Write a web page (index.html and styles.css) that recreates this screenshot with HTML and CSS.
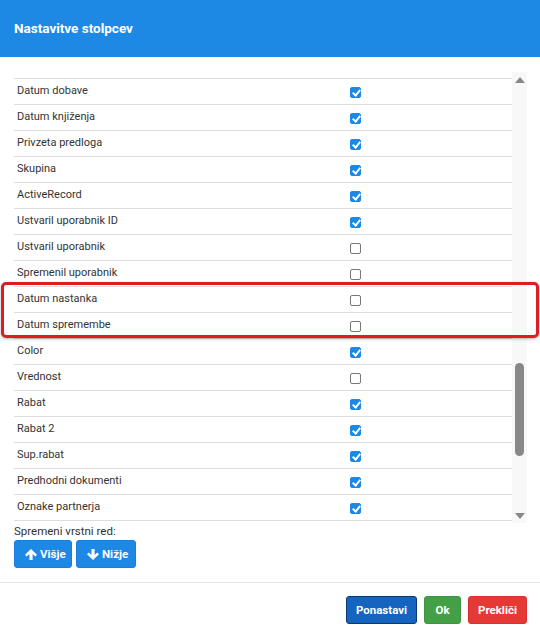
FILE: index.html
```html
<!DOCTYPE html>
<html lang="sl">
<head>
    <meta charset="UTF-8">
    <meta name="viewport" content="width=device-width, initial-scale=1.0">
    <title>Nastavitve stolpcev</title>
    <link rel="stylesheet" href="styles.css">
</head>
<body>
    <div class="modal">
        <div class="modal-header">
            <h1>Nastavitve stolpcev</h1>
        </div>

        <div class="modal-body">
            <div class="columns-box">
                <div class="columns-list">
                    <div class="col-row"><span class="col-name">Datum dobave</span><span class="check on"></span></div>
                    <div class="col-row"><span class="col-name">Datum knjiženja</span><span class="check on"></span></div>
                    <div class="col-row"><span class="col-name">Privzeta predloga</span><span class="check on"></span></div>
                    <div class="col-row"><span class="col-name">Skupina</span><span class="check on"></span></div>
                    <div class="col-row"><span class="col-name">ActiveRecord</span><span class="check on"></span></div>
                    <div class="col-row"><span class="col-name">Ustvaril uporabnik ID</span><span class="check on"></span></div>
                    <div class="col-row"><span class="col-name">Ustvaril uporabnik</span><span class="check"></span></div>
                    <div class="col-row"><span class="col-name">Spremenil uporabnik</span><span class="check"></span></div>
                    <div class="col-row"><span class="col-name">Datum nastanka</span><span class="check"></span></div>
                    <div class="col-row"><span class="col-name">Datum spremembe</span><span class="check"></span></div>
                    <div class="col-row"><span class="col-name">Color</span><span class="check on"></span></div>
                    <div class="col-row"><span class="col-name">Vrednost</span><span class="check"></span></div>
                    <div class="col-row"><span class="col-name">Rabat</span><span class="check on"></span></div>
                    <div class="col-row"><span class="col-name">Rabat 2</span><span class="check on"></span></div>
                    <div class="col-row"><span class="col-name">Sup.rabat</span><span class="check on"></span></div>
                    <div class="col-row"><span class="col-name">Predhodni dokumenti</span><span class="check on"></span></div>
                    <div class="col-row"><span class="col-name">Oznake partnerja</span><span class="check on"></span></div>
                </div>
                <div class="scrollbar">
                    <span class="arrow up"></span>
                    <div class="track"><div class="thumb"></div></div>
                    <span class="arrow down"></span>
                </div>
            </div>

            <div class="order-label">Spremeni vrstni red:</div>
            <div class="order-buttons">
                <button class="btn btn-blue">
                    <svg class="icon" width="12" height="11" viewBox="0 0 12 11"><path d="M6 0 L12 5.8 L10.3 7.5 L7.6 4.9 V11 H4.4 V4.9 L1.7 7.5 L0 5.8 Z" fill="#fff"/></svg>
                    Višje
                </button>
                <button class="btn btn-blue">
                    <svg class="icon" width="12" height="11" viewBox="0 0 12 11"><path d="M6 11 L12 5.2 L10.3 3.5 L7.6 6.1 V0 H4.4 V6.1 L1.7 3.5 L0 5.2 Z" fill="#fff"/></svg>
                    Nižje
                </button>
            </div>
        </div>

        <div class="modal-footer">
            <button class="btn btn-reset">Ponastavi</button>
            <button class="btn btn-ok">Ok</button>
            <button class="btn btn-cancel">Prekliči</button>
        </div>

        <!-- marker around the two date columns -->
        <div class="highlight"></div>
    </div>
</body>
</html>
```

FILE: styles.css
```css
* {
    margin: 0;
    padding: 0;
    box-sizing: border-box;
}

body {
    font-family: Roboto, "Liberation Sans", sans-serif;
    font-size: 11px;
    color: #333;
    background: #fff;
}

.modal {
    position: relative;
    width: 540px;
    height: 637px;
}

.modal-header {
    height: 57px;
    background: #1e88e5;
    display: flex;
    align-items: center;
    padding: 0 14px 2px;
}

.modal-header h1 {
    color: #fff;
    font-size: 13.5px;
    font-weight: 700;
}

.modal-body {
    padding: 15px 13px 0 14px;
}

.columns-box {
    display: flex;
    height: 451px;
}

.columns-list {
    flex: 1;
    padding-top: 6px;
}

.col-row {
    display: flex;
    align-items: center;
    height: 26px;
    border-top: 1px solid #ddd;
}

.col-row:last-child {
    border-bottom: 1px solid #ddd;
    height: 27px;
}

.col-name {
    width: 336px;
    padding: 0 0 3px 3px;
}

.check {
    width: 11px;
    height: 11px;
    border: 1px solid #777;
    border-radius: 2px;
    background: #fff;
    position: relative;
    margin-top: 1px;
}

.check.on {
    background: #1e88e5;
    border-color: #1e88e5;
}

.check.on::after {
    content: "";
    position: absolute;
    left: 3px;
    top: 0px;
    width: 3px;
    height: 6px;
    border: solid #fff;
    border-width: 0 2px 2px 0;
    transform: rotate(40deg);
}

.scrollbar {
    width: 15px;
    background: #f8f8f8;
    display: flex;
    flex-direction: column;
    align-items: center;
    padding: 5px 0 4px;
}

.arrow {
    width: 0;
    height: 0;
    border-left: 5px solid transparent;
    border-right: 5px solid transparent;
}

.arrow.up {
    border-bottom: 6px solid #888;
}

.arrow.down {
    border-top: 6px solid #888;
}

.track {
    flex: 1;
    width: 100%;
    display: flex;
    justify-content: center;
    padding-top: 280px;
}

.thumb {
    width: 9px;
    height: 93px;
    background: #888;
    border-radius: 5px;
}

.order-label {
    margin-top: 1px;
    line-height: 14px;
    font-size: 11.5px;
}

.order-buttons {
    display: flex;
    gap: 4px;
    margin-top: 2px;
}

.btn {
    font-family: Roboto, "Liberation Sans", sans-serif;
    font-size: 11.5px;
    font-weight: 700;
    color: #fff;
    border: 1px solid transparent;
    border-radius: 3px;
    height: 28px;
    padding: 0 10px;
    display: inline-flex;
    align-items: center;
    gap: 3px;
    cursor: pointer;
}

.icon {
    flex-shrink: 0;
}

.btn-blue {
    background: #1e88e5;
    border-color: #1a7fd8;
}

.order-buttons .btn:first-child {
    width: 58px;
}

.order-buttons .btn:last-child {
    width: 60px;
}

.modal-footer {
    margin-top: 14px;
    border-top: 1px solid #e4e4e4;
    padding: 13px 13px 0 0;
    display: flex;
    justify-content: flex-end;
    gap: 7px;
}

.btn-reset {
    background: #1565c0;
    border-color: #0b3a70;
    width: 71px;
    justify-content: center;
}

.btn-ok {
    background: #43a047;
    border-color: #3d9541;
    width: 37px;
    justify-content: center;
}

.btn-cancel {
    background: #e53935;
    border-color: #d8302c;
    width: 59px;
    justify-content: center;
}

.highlight {
    position: absolute;
    left: 1px;
    top: 282px;
    width: 538px;
    height: 56px;
    border: 3px solid #e01b22;
    border-radius: 5px;
    box-shadow: 0 1px 3px rgba(0, 0, 0, 0.3);
}
```
